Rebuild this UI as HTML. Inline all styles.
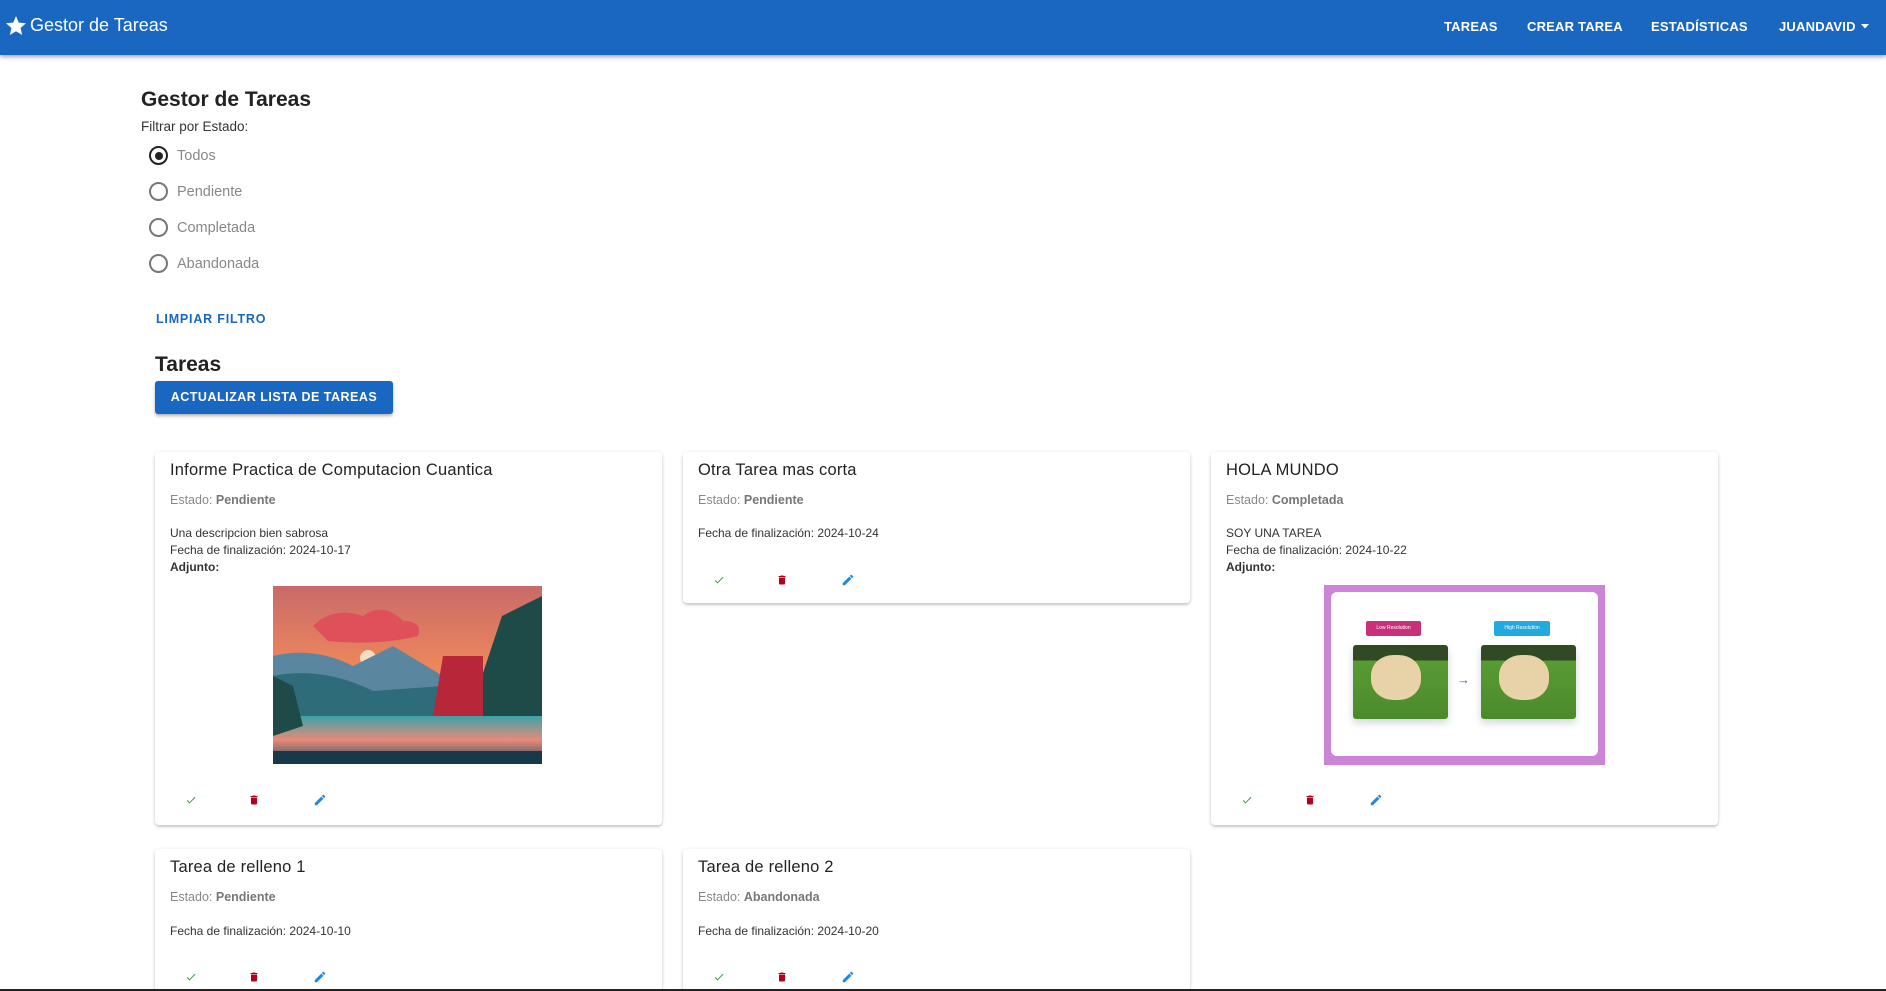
<!DOCTYPE html>
<html><head><meta charset="utf-8">
<style>
*{box-sizing:border-box;margin:0;padding:0}
html,body{width:1886px;height:991px;overflow:hidden}
body{background:#fff;font-family:"Liberation Sans",sans-serif;color:#222;position:relative}
.nav{position:absolute;left:0;top:0;width:1886px;height:55px;background:#1a67c1;box-shadow:0 2px 4px rgba(0,0,0,.35)}
.brand{position:absolute;left:30px;top:15px;color:#fff;font-size:18px}
.ni{position:absolute;top:19px;color:#fff;font-size:13px;font-weight:bold;letter-spacing:.2px}
.abs{position:absolute}
.radio{position:absolute;left:149px;width:19px;height:19px;border:2px solid #777;border-radius:50%}
.rl{position:absolute;left:177px;font-size:14.5px;color:#888}
.card{position:absolute;width:507px;background:#fff;border-radius:4px;box-shadow:0 2px 2px rgba(0,0,0,.14),0 1px 5px rgba(0,0,0,.12)}
.ct{position:absolute;left:15px;font-size:16.5px;color:#222;letter-spacing:.2px}
.ce{position:absolute;left:15px;font-size:12.5px;color:#888}
.ce b{color:#777}
.cd{position:absolute;left:15px;font-size:12px;color:#333;line-height:17px}
.ic{position:absolute}
</style></head><body>
<div class="nav">
<svg class="abs" style="left:4px;top:14px" width="24" height="24" viewBox="0 0 24 24"><path fill="#fff" d="M12 17.27L18.18 21l-1.64-7.03L22 9.24l-7.19-.61L12 2 9.19 8.63 2 9.24l5.46 4.73L5.82 21z"/></svg>
<div class="brand">Gestor de Tareas</div>
<div class="ni" style="left:1444px">TAREAS</div>
<div class="ni" style="left:1527px">CREAR TAREA</div>
<div class="ni" style="left:1651px">ESTADÍSTICAS</div>
<div class="ni" style="left:1779px">JUANDAVID</div>
<svg class="abs" style="left:1861px;top:24px" width="9" height="5"><path d="M0 0h8L4 4.5z" fill="#fff"/></svg>
</div>

<div class="abs" style="left:141px;top:88px;font-size:21px;font-weight:bold;color:#222">Gestor de Tareas</div>
<div class="abs" style="left:141px;top:119px;font-size:13.5px;color:#333">Filtrar por Estado:</div>
<div class="radio" style="top:146px;border-color:#222"><div style="position:absolute;left:3.5px;top:3.5px;width:8px;height:8px;border-radius:50%;background:#222"></div></div>
<div class="rl" style="top:148px">Todos</div>
<div class="radio" style="top:182px"></div><div class="rl" style="top:184px">Pendiente</div>
<div class="radio" style="top:218px"></div><div class="rl" style="top:220px">Completada</div>
<div class="radio" style="top:254px"></div><div class="rl" style="top:256px">Abandonada</div>
<div class="abs" style="left:156px;top:312px;font-size:12.5px;color:#1a67c1;font-weight:bold;letter-spacing:.8px">LIMPIAR FILTRO</div>
<div class="abs" style="left:155px;top:353px;font-size:21px;font-weight:bold;color:#222">Tareas</div>
<div class="abs" style="left:155px;top:381px;width:238px;height:33px;background:#1a67c1;border-radius:3px;box-shadow:0 2px 3px rgba(0,0,0,.3);color:#fff;font-size:12.5px;font-weight:bold;letter-spacing:.5px;text-align:center;line-height:33px">ACTUALIZAR LISTA DE TAREAS</div>

<!-- card 1 -->
<div class="card" style="left:155px;top:452px;height:373px">
<div class="ct" style="top:9px">Informe Practica de Computacion Cuantica</div>
<div class="ce" style="top:41px">Estado: <b>Pendiente</b></div>
<div class="cd" style="top:73px">Una descripcion bien sabrosa<br>Fecha de finalización: 2024-10-17<br><b>Adjunto:</b></div>
<svg class="abs" style="left:118px;top:134px" width="269" height="178" viewBox="0 0 269 178">
<defs><linearGradient id="sk" x1="0" y1="0" x2="0" y2="1"><stop offset="0" stop-color="#c96a6a"/><stop offset=".5" stop-color="#f08a5a"/><stop offset="1" stop-color="#f7c36a"/></linearGradient>
<linearGradient id="wt" x1="0" y1="0" x2="0" y2="1"><stop offset="0" stop-color="#3aa3a8"/><stop offset=".5" stop-color="#e88a78"/><stop offset="1" stop-color="#1d4a5e"/></linearGradient></defs>
<rect width="269" height="178" fill="url(#sk)"/>
<path d="M40 40q20-20 50-10q20-15 40 5q20 0 15 15q-40 10-90 5z" fill="#e0505a"/>
<circle cx="95" cy="72" r="8" fill="#f8dcc0"/>
<path d="M0 70q40-10 80 10l40-20l50 30v40H0z" fill="#5a86a0"/>
<path d="M0 90q50-10 100 15l70-5v30H0z" fill="#2e6c7a"/>
<rect y="130" width="269" height="48" fill="url(#wt)"/>
<path d="M0 90l20 10l10 40l-30 10zM269 10l-40 20l-20 60l-20 40h80z" fill="#1e4a48"/>
<path d="M160 130h50v-60h-40z" fill="#b8263a"/>
<path d="M0 165h269v13H0z" fill="#173a4a"/>
</svg>
<svg class="ic" style="left:29px;top:342px" width="14" height="12" viewBox="0 0 24 24"><path d="M9 16.17L4.83 12l-1.42 1.41L9 19 21 7l-1.41-1.41z" fill="#43a047"/></svg>
<svg class="ic" style="left:93px;top:341px" width="12" height="14" viewBox="0 0 24 24"><path d="M6 19c0 1.1.9 2 2 2h8c1.1 0 2-.9 2-2V7H6v12zM19 4h-3.5l-1-1h-5l-1 1H5v2h14V4z" fill="#b0001e"/></svg>
<svg class="ic" style="left:158px;top:341px" width="14" height="14" viewBox="0 0 24 24"><path d="M3 17.25V21h3.75L17.81 9.94l-3.75-3.75L3 17.25zM20.71 7.04a1 1 0 000-1.41l-2.34-2.34a1 1 0 00-1.41 0l-1.83 1.83 3.75 3.75 1.83-1.83z" fill="#1e88e5"/></svg>
</div>

<!-- card 2 -->
<div class="card" style="left:683px;top:452px;height:151px">
<div class="ct" style="top:9px">Otra Tarea mas corta</div>
<div class="ce" style="top:41px">Estado: <b>Pendiente</b></div>
<div class="cd" style="top:73px">Fecha de finalización: 2024-10-24</div>
<svg class="ic" style="left:29px;top:122px" width="14" height="12" viewBox="0 0 24 24"><path d="M9 16.17L4.83 12l-1.42 1.41L9 19 21 7l-1.41-1.41z" fill="#43a047"/></svg>
<svg class="ic" style="left:93px;top:121px" width="12" height="14" viewBox="0 0 24 24"><path d="M6 19c0 1.1.9 2 2 2h8c1.1 0 2-.9 2-2V7H6v12zM19 4h-3.5l-1-1h-5l-1 1H5v2h14V4z" fill="#b0001e"/></svg>
<svg class="ic" style="left:158px;top:121px" width="14" height="14" viewBox="0 0 24 24"><path d="M3 17.25V21h3.75L17.81 9.94l-3.75-3.75L3 17.25zM20.71 7.04a1 1 0 000-1.41l-2.34-2.34a1 1 0 00-1.41 0l-1.83 1.83 3.75 3.75 1.83-1.83z" fill="#1e88e5"/></svg>
</div>

<!-- card 3 -->
<div class="card" style="left:1211px;top:452px;height:373px">
<div class="ct" style="top:9px">HOLA MUNDO</div>
<div class="ce" style="top:41px">Estado: <b>Completada</b></div>
<div class="cd" style="top:73px">SOY UNA TAREA<br>Fecha de finalización: 2024-10-22<br><b>Adjunto:</b></div>
<div class="abs" style="left:113px;top:133px;width:281px;height:180px;background:#cc84d6">
 <div class="abs" style="left:7px;top:7px;width:267px;height:164px;background:#fff;border-radius:6px">
  <div class="abs" style="left:35px;top:29px;width:55px;height:15px;background:#c8317a;border-radius:2px;color:#fff;font-size:5px;text-align:center;line-height:15px">Low Resolution</div>
  <div class="abs" style="left:163px;top:29px;width:56px;height:15px;background:#22a9dd;border-radius:2px;color:#fff;font-size:5px;text-align:center;line-height:15px">High Resolution</div>
  <div class="abs" style="left:22px;top:53px;width:95px;height:74px;border-radius:3px;background:linear-gradient(#2f4a24 0,#2f4a24 20%,#5a9a34 22%,#4a8a2c 100%);box-shadow:0 4px 8px rgba(0,60,80,.2)"><div class="abs" style="left:18px;top:10px;width:50px;height:45px;border-radius:45%;background:#e8d2a8"></div></div>
  <div class="abs" style="left:150px;top:53px;width:95px;height:74px;border-radius:3px;background:linear-gradient(#2f4a24 0,#2f4a24 20%,#5a9a34 22%,#4a8a2c 100%);box-shadow:0 4px 8px rgba(0,60,80,.2)"><div class="abs" style="left:18px;top:10px;width:50px;height:45px;border-radius:45%;background:#e8d2a8"></div></div>
  <div class="abs" style="left:126px;top:80px;color:#8a3ad8;font-size:13px">→</div>
 </div>
</div>
<svg class="ic" style="left:29px;top:342px" width="14" height="12" viewBox="0 0 24 24"><path d="M9 16.17L4.83 12l-1.42 1.41L9 19 21 7l-1.41-1.41z" fill="#43a047"/></svg>
<svg class="ic" style="left:93px;top:341px" width="12" height="14" viewBox="0 0 24 24"><path d="M6 19c0 1.1.9 2 2 2h8c1.1 0 2-.9 2-2V7H6v12zM19 4h-3.5l-1-1h-5l-1 1H5v2h14V4z" fill="#b0001e"/></svg>
<svg class="ic" style="left:158px;top:341px" width="14" height="14" viewBox="0 0 24 24"><path d="M3 17.25V21h3.75L17.81 9.94l-3.75-3.75L3 17.25zM20.71 7.04a1 1 0 000-1.41l-2.34-2.34a1 1 0 00-1.41 0l-1.83 1.83 3.75 3.75 1.83-1.83z" fill="#1e88e5"/></svg>
</div>

<!-- row 2 -->
<div class="card" style="left:155px;top:849px;height:142px;border-radius:4px 4px 0 0">
<div class="ct" style="top:9px">Tarea de relleno 1</div>
<div class="ce" style="top:41px">Estado: <b>Pendiente</b></div>
<div class="cd" style="top:74px">Fecha de finalización: 2024-10-10</div>
<svg class="ic" style="left:29px;top:122px" width="14" height="12" viewBox="0 0 24 24"><path d="M9 16.17L4.83 12l-1.42 1.41L9 19 21 7l-1.41-1.41z" fill="#43a047"/></svg>
<svg class="ic" style="left:93px;top:121px" width="12" height="14" viewBox="0 0 24 24"><path d="M6 19c0 1.1.9 2 2 2h8c1.1 0 2-.9 2-2V7H6v12zM19 4h-3.5l-1-1h-5l-1 1H5v2h14V4z" fill="#b0001e"/></svg>
<svg class="ic" style="left:158px;top:121px" width="14" height="14" viewBox="0 0 24 24"><path d="M3 17.25V21h3.75L17.81 9.94l-3.75-3.75L3 17.25zM20.71 7.04a1 1 0 000-1.41l-2.34-2.34a1 1 0 00-1.41 0l-1.83 1.83 3.75 3.75 1.83-1.83z" fill="#1e88e5"/></svg>
</div>
<div class="card" style="left:683px;top:849px;height:142px;border-radius:4px 4px 0 0">
<div class="ct" style="top:9px">Tarea de relleno 2</div>
<div class="ce" style="top:41px">Estado: <b>Abandonada</b></div>
<div class="cd" style="top:74px">Fecha de finalización: 2024-10-20</div>
<svg class="ic" style="left:29px;top:122px" width="14" height="12" viewBox="0 0 24 24"><path d="M9 16.17L4.83 12l-1.42 1.41L9 19 21 7l-1.41-1.41z" fill="#43a047"/></svg>
<svg class="ic" style="left:93px;top:121px" width="12" height="14" viewBox="0 0 24 24"><path d="M6 19c0 1.1.9 2 2 2h8c1.1 0 2-.9 2-2V7H6v12zM19 4h-3.5l-1-1h-5l-1 1H5v2h14V4z" fill="#b0001e"/></svg>
<svg class="ic" style="left:158px;top:121px" width="14" height="14" viewBox="0 0 24 24"><path d="M3 17.25V21h3.75L17.81 9.94l-3.75-3.75L3 17.25zM20.71 7.04a1 1 0 000-1.41l-2.34-2.34a1 1 0 00-1.41 0l-1.83 1.83 3.75 3.75 1.83-1.83z" fill="#1e88e5"/></svg>
</div>
<div class="abs" style="left:0;top:989px;width:1886px;height:2px;background:#222"></div>
</body></html>
